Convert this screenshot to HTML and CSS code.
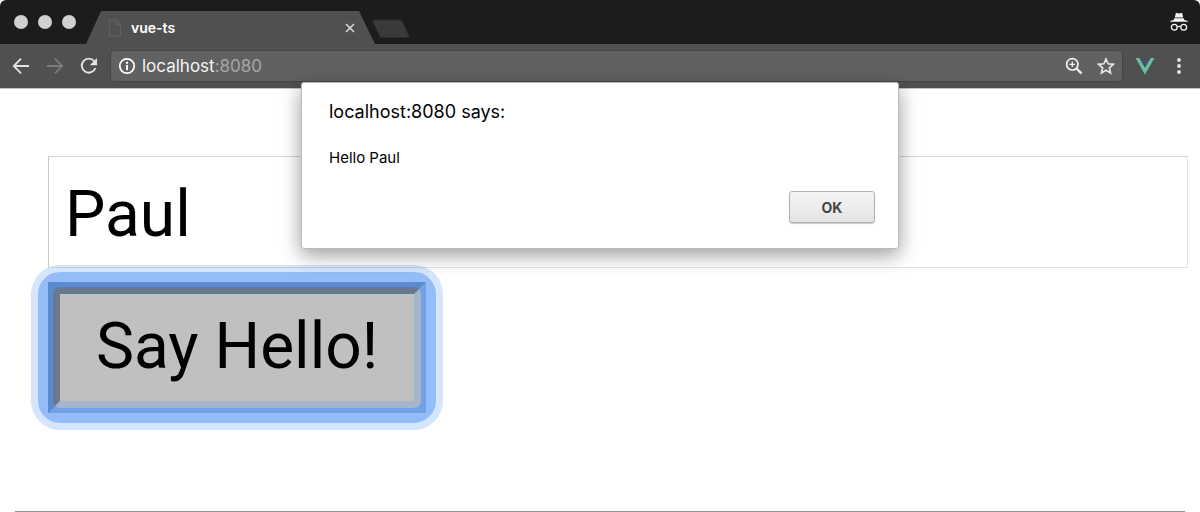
FILE: index.html
```html
<!DOCTYPE html>
<html lang="en">
<head>
<meta charset="utf-8">
<title>vue-ts</title>
<link rel="stylesheet" href="styles.css">
</head>
<body>
<div class="window">
  <header class="titlebar">
    <div class="lights"><span class="light"></span><span class="light"></span><span class="light"></span></div>
    <div class="tab">
      <svg class="page-icon" width="14" height="18" viewBox="0 0 14 18" fill="none" stroke="#5e5e5e" stroke-width="1.4"><path d="M1.5 1h6.500l4.500 4.500V17h-11zM8 1v4.500h4.500"/></svg>
      <span class="tab-title">vue-ts</span>
      <button class="icon-button" aria-label="Close tab"><svg width="10" height="10" viewBox="0 0 10 10" stroke="#dcdcdc" stroke-width="1.5"><path d="M1 1l8 8M9 1l-8 8"/></svg></button>
    </div>
    <button class="new-tab" aria-label="New tab"><svg width="40" height="20" viewBox="0 0 40 20"><path d="M2.500 1h27q1 0 1.500 1l7 15q.5 1.500-1 1.500H11q-1.500 0-2-1L1.500 2.500Q1 1 2.500 1z" fill="#3a3a3a" stroke="#2c2c2c"/></svg></button>
    <svg class="incognito" width="20" height="20" viewBox="0 0 20 20"><path d="M5.800 5.500L6.800 1.300Q7 .7 7.800.9l2.200.6 2.200-.6q.8-.2 1 .4l1 4.200zM5.300 6.300h9.400l.6 1.700q2.200.3 4.200 1.700H.5Q2.500 8.300 4.700 8z" fill="#f4f4f4"/><g fill="none" stroke="#f4f4f4" stroke-width="1.300"><circle cx="5.300" cy="15.200" r="2.900"/><circle cx="14.700" cy="15.200" r="2.900"/><path d="M8.200 14.800q1.800-1 3.600 0"/></g></svg>
  </header>
  <nav class="toolbar">
    <button class="icon-button" aria-label="Back"><svg width="18" height="18" viewBox="0 0 18 18" fill="none" stroke="#e4e4e4" stroke-width="1.800"><path d="M17 9H2M9 1.700L1.800 9 9 16.300"/></svg></button>
    <button class="icon-button" aria-label="Forward"><svg width="18" height="18" viewBox="0 0 18 18" fill="none" stroke="#7b7b7b" stroke-width="1.800"><path d="M1 9h15M9 1.700L16.200 9 9 16.300"/></svg></button>
    <button class="icon-button" aria-label="Reload"><svg width="18" height="18" viewBox="0 0 18 18"><path d="M14.200 4.200A7 7 0 1 0 15.400 11" fill="none" stroke="#e4e4e4" stroke-width="1.900"/><path d="M17 1v7.200H9.800z" fill="#e4e4e4"/></svg></button>
    <div class="address">
      <svg width="18" height="18" viewBox="0 0 18 18"><circle cx="9" cy="9" r="7.200" fill="none" stroke="#fff" stroke-width="1.700"/><path d="M8 4.800h2v2H8zM8 8h2v5.200H8z" fill="#fff"/></svg>
      <span class="url">localhost<span class="port">:8080</span></span>
      <button class="icon-button" aria-label="Zoom"><svg width="18" height="18" viewBox="0 0 18 18" fill="none" stroke="#efefef"><circle cx="7.300" cy="7.300" r="5.700" stroke-width="1.700"/><path d="M11.500 11.500l5 5" stroke-width="2.400"/><path d="M7.300 4.500v5.600M4.500 7.300h5.600" stroke-width="1.300"/></svg></button>
      <button class="icon-button" aria-label="Bookmark"><svg width="18" height="18" viewBox="0 0 18 18" fill="none" stroke="#e4e4e4" stroke-width="1.700"><path d="M9 2l2.100 4.800 5.200.5-3.900 3.500 1.100 5.200L9 13.300 4.500 16l1.100-5.200-3.900-3.500 5.200-.5z"/></svg></button>
    </div>
    <button class="icon-button" aria-label="Vue devtools"><svg width="20" height="18" viewBox="0 0 20 18"><path d="M.5 1h4L10 10.500 15.500 1h4L10 17.500z" fill="#68c09a"/><path d="M4.500 1h3.300L10 4.800 12.200 1h3.300L10 10.500z" fill="#435070"/></svg></button>
    <button class="icon-button menu" aria-label="Menu"><svg width="6" height="18" viewBox="0 0 6 18" fill="#e4e4e4"><circle cx="3" cy="3" r="1.900"/><circle cx="3" cy="9" r="1.900"/><circle cx="3" cy="15" r="1.900"/></svg></button>
  </nav>
  <main class="page">
    <input class="name" type="text" value="Paul" aria-label="Name">
    <button class="hello">Say Hello!</button>
    <section class="alert" role="dialog" aria-labelledby="alert-title">
      <h1 class="alert-title" id="alert-title">localhost:8080 says:</h1>
      <p class="alert-text">Hello Paul</p>
      <button class="ok">OK</button>
    </section>
  </main>
</div>
</body>
</html>
```
FILE: styles.css
```css
* { box-sizing: border-box; }

body {
  margin: 0;
  background: #fff;
  color: #000;
  font-family: Inter, Roboto, sans-serif;
}

button { font-family: inherit; cursor: pointer; }
svg { display: block; flex: none; }

.window {
  display: flex;
  flex-direction: column;
  min-height: 100vh;
}

.titlebar {
  display: flex;
  align-items: center;
  height: 44px;
  padding: 0 11px 0 14px;
  background: #1b1c1e;
  border-radius: 6px 6px 0 0;
}

.lights { display: flex; gap: 10px; }

.light {
  width: 14px;
  height: 14px;
  border-radius: 50%;
  background: #d0d0d0;
}

.tab {
  display: flex;
  align-items: center;
  align-self: flex-end;
  width: 289px;
  height: 33px;
  margin-left: 10px;
  padding: 0 20px 0 22px;
  background: #505050;
  clip-path: polygon(0 100%, 15px 0, 273px 0, 100% 100%);
}

.tab-title {
  flex: 1;
  padding-left: 9px;
  color: #fff;
  font-size: 14px;
  font-weight: 600;
}

.icon-button {
  padding: 0;
  border: 0;
  background: none;
}

.new-tab {
  margin-top: 14px;
  margin-left: -4px;
  padding: 0;
  border: 0;
  background: none;
}

.incognito { margin-left: auto; }

.toolbar {
  display: flex;
  align-items: center;
  gap: 16px;
  height: 45px;
  padding: 0 18px 0 12px;
  background: #505050;
  border-bottom: 1px solid #c4c4c4;
}

.menu { margin-left: 5px; }

.address {
  display: flex;
  flex: 1;
  align-items: center;
  gap: 14px;
  height: 32px;
  margin-right: -4px;
  margin-left: -4px;
  padding: 0 7px;
  background: #616161;
  border: 1px solid #464646;
  border-radius: 4px;
}

.url {
  flex: 1;
  margin-left: -8px;
  color: #f4f4f4;
  font-size: 17px;
}

.port { color: #a6a6a6; }

.page {
  position: relative;
  display: flex;
  flex: 1;
  flex-direction: column;
  align-items: flex-start;
  gap: 14px;
  padding: 67px 12px 0 48px;
}

.page::after {
  content: "";
  position: absolute;
  right: 15px;
  bottom: 0;
  left: 15px;
  height: 1px;
  background: #8f8f8f;
}

.name,
.hello {
  color: #000;
  font-family: Roboto, sans-serif;
  font-size: 64px;
}

.name {
  width: 100%;
  height: 112px;
  padding: 4px 16px 0;
  background: #fff;
  border: 1px solid;
  border-color: #d4d4d4 #e2e2e2 #e2e2e2 #c6c6c6;
}

.hello {
  position: relative;
  height: 131px;
  padding: 0 36px 2px;
  background: #c0c0c0;
  border: 12px solid;
  border-color: #68788f #a5b5cc #a5b5cc #68788f;
}

.hello::after {
  content: "";
  position: absolute;
  inset: -22px;
  border: 15px solid rgba(84, 150, 244, 0.63);
  border-radius: 22px;
  box-shadow: 0 0 0 7px rgba(84, 150, 244, 0.25);
}

.alert {
  position: absolute;
  top: -7px;
  right: 0;
  left: 0;
  display: flex;
  flex-direction: column;
  width: 598px;
  margin: 0 auto;
  padding: 17px 23px 25px 27px;
  background: #fff;
  border: 1px solid #bbb;
  border-radius: 3px;
  box-shadow: 0 6px 20px rgba(0, 0, 0, 0.4);
}

.alert-title {
  margin: 0;
  font-size: 18px;
  font-weight: 400;
  line-height: 24px;
}

.alert-text {
  margin: 24px 0 23px;
  font-size: 15px;
  line-height: 20px;
}

.ok {
  align-self: flex-end;
  width: 86px;
  height: 32px;
  background: linear-gradient(#f4f4f4, #e4e4e4);
  border: 1px solid #b0b0b0;
  border-radius: 3px;
  box-shadow: 0 1px 1px rgba(0, 0, 0, 0.2);
  color: #444;
  font-size: 14px;
  font-weight: 700;
}
```
